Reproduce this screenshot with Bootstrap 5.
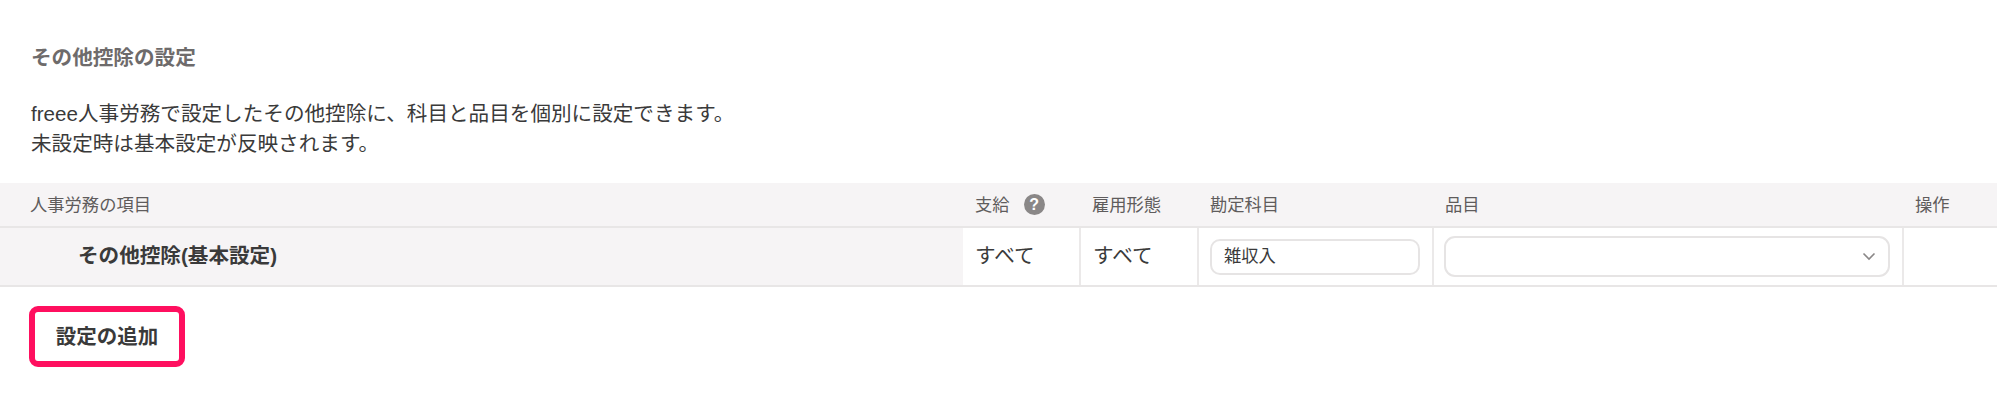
<!DOCTYPE html>
<html lang="ja">
<head>
<meta charset="utf-8">
<title>その他控除の設定</title>
<link href="https://cdn.jsdelivr.net/npm/bootstrap@5.3.0/dist/css/bootstrap.min.css" rel="stylesheet">
<style>
html,body{background:#fff;height:410px;overflow:hidden}
body{font-family:"Liberation Sans","Noto Sans CJK JP",sans-serif;color:#3a3a3a;font-size:20.6px;line-height:30px;padding-top:43px}
.pg-title{font-size:20.6px;font-weight:700;color:#6e6b6b;margin:0 0 0 31px;line-height:30px}
.pg-desc{margin:26px 0 0 31px;font-size:20.6px;line-height:30px;color:#3a3a3a}
.tbl-wrap{margin:24px 2px 0 0}
.tbl-set{table-layout:fixed;width:1997px;margin:0;border-collapse:collapse;color:#3a3a3a}
.tbl-set th,.tbl-set td{padding:0;vertical-align:middle;border:0;box-shadow:none;background:transparent}
.tbl-set thead th{background:#f6f4f5;height:44px;font-size:17.3px;font-weight:400;color:#5f5c5c;padding-left:12px;border-bottom:2px solid #e8e6e6;line-height:24px}
.tbl-set thead th:first-child{padding-left:30px}
.tbl-set tbody td{height:59px;font-size:20.6px;padding:0 0 2px 12px;border-right:2px solid #ebe9e9;border-bottom:2px solid #e8e6e6}
.tbl-set tbody td:last-child{border-right:0}
.tbl-set tbody td.name-cell{background:#f6f4f5;font-weight:700;padding-left:78px;border-right:0}
.tbl-set tbody td.ctl-cell{padding:0 0 0 11px}
.tbl-set tbody td.sel-cell{padding:0 0 0 10px}
.help-dot{width:21px;height:21px;border-radius:50%;background:#8a8787;color:#fff;font-size:16px;font-weight:700;margin-left:14px;line-height:1}
.txt-box{display:flex;align-items:center;width:210px;height:36px;border:2px solid #e6e4e4;border-radius:10px;padding:0 12px;font-size:17.3px;background:#fff;line-height:1}
.sel-box{display:flex;align-items:center;justify-content:flex-end;width:446px;height:41px;border:2px solid #e6e4e4;border-radius:11px;padding:0 12px;background:#fff}
.btn-add{margin:19px 0 0 29px;width:156px;height:61px;border:6px solid #ff0f5f;border-radius:9px;background:#fff;color:#3a3a3a;font-size:20.5px;font-weight:700;padding:1px 0 0;line-height:1}
.btn-add:hover,.btn-add:active{border-color:#ff0f5f!important;background:#fff!important;color:#3a3a3a!important}
</style>
</head>
<body>
<h2 class="pg-title">その他控除の設定</h2>
<p class="pg-desc">freee人事労務で設定したその他控除に、科目と品目を個別に設定できます。<br>未設定時は基本設定が反映されます。</p>
<div class="tbl-wrap">
<table class="table tbl-set">
<colgroup><col style="width:963px"><col style="width:117px"><col style="width:118px"><col style="width:235px"><col style="width:470px"><col style="width:94px"></colgroup>
<thead><tr>
<th>人事労務の項目</th>
<th><div class="d-flex align-items-center">支給<span class="help-dot d-flex align-items-center justify-content-center">?</span></div></th>
<th>雇用形態</th>
<th>勘定科目</th>
<th>品目</th>
<th>操作</th>
</tr></thead>
<tbody><tr>
<td class="name-cell">その他控除(基本設定)</td>
<td>すべて</td>
<td>すべて</td>
<td class="ctl-cell"><div class="txt-box">雑収入</div></td>
<td class="sel-cell"><div class="sel-box"><svg width="14" height="9" viewBox="0 0 14 9"><path d="M1.5 1.5 7 7l5.5-5.5" fill="none" stroke="#8a8787" stroke-width="1.6"/></svg></div></td>
<td></td>
</tr></tbody>
</table>
</div>
<button type="button" class="btn btn-add d-block">設定の追加</button>
<script src="https://cdn.jsdelivr.net/npm/bootstrap@5.3.0/dist/js/bootstrap.bundle.min.js"></script>
</body>
</html>
